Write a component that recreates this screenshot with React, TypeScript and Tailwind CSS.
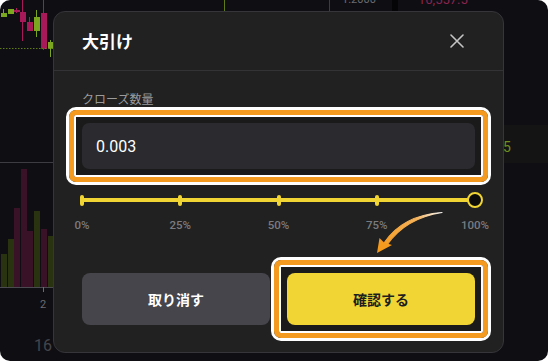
import { useState } from "react";

const marks = ["0%", "25%", "50%", "75%", "100%"];

// background candles (x, open/close top, bottom, wick top, wick bottom, up?)
const candles = [
  { x: 1, t: 13, b: 17, wt: 9, wb: 17, up: true },
  { x: 8, t: 9, b: 14, wt: 9, wb: 14, up: true },
  { x: 14, t: 10, b: 12, wt: 8, wb: 13, up: false },
  { x: 20, t: 12, b: 22, wt: 0, wb: 41, up: false },
  { x: 27, t: 22, b: 31, wt: 17, wb: 31, up: false },
  { x: 34, t: 17, b: 31, wt: 10, wb: 37, up: true },
  { x: 41, t: 13, b: 49, wt: 0, wb: 50, up: false },
  { x: 48, t: 42, b: 49, wt: 40, wb: 57, up: true },
];

const volumes = [
  { x: 1, t: 254, up: true },
  { x: 8, t: 239, up: true },
  { x: 14, t: 208, up: false },
  { x: 21, t: 169, up: false },
  { x: 27, t: 231, up: false },
  { x: 34, t: 211, up: true },
  { x: 41, t: 229, up: false },
  { x: 48, t: 236, up: true },
];

const ChartBackdrop = () => (
  <svg width="548" height="361" viewBox="0 0 548 361" className="block">
    {/* top cells */}
    <line x1="224.5" y1="0" x2="224.5" y2="12" stroke="#5e7a1a" strokeWidth="1" />
    <line x1="329.5" y1="0" x2="329.5" y2="12" stroke="#3c3c44" strokeWidth="1" />
    <rect x="392" y="0" width="6" height="12" fill="#050507" />
    <text x="342" y="3" fill="#6b6b72" fontSize="11" fontFamily="Roboto, sans-serif">1.2000</text>
    <text x="418" y="4" fill="#8a2450" fontSize="13" fontFamily="Roboto, sans-serif">16,557.5</text>

    {/* candles */}
    {candles.map((c, i) => (
      <g key={i}>
        <line x1={c.x + 2.5} y1={c.wt} x2={c.x + 2.5} y2={c.wb} stroke={c.up ? "#7aa620" : "#a8195a"} strokeWidth="1" />
        <rect x={c.x} y={c.t} width="6" height={c.b - c.t} fill={c.up ? "#7aa620" : "#a8195a"} />
      </g>
    ))}
    <line x1="0" y1="48.5" x2="53" y2="48.5" stroke="#5e7a1a" strokeWidth="1" strokeDasharray="1.5 1.5" />

    {/* pane separator */}
    <line x1="0" y1="162.5" x2="53" y2="162.5" stroke="#3c3c42" strokeWidth="1" />

    {/* volume */}
    {volumes.map((v, i) => (
      <rect key={i} x={v.x} y={v.t} width="6" height={287 - v.t} fill={v.up ? "#29330f" : "#3a1227"} />
    ))}
    <line x1="0" y1="287.5" x2="53" y2="287.5" stroke="#4a4a50" strokeWidth="1" />
    <line x1="43.5" y1="287" x2="43.5" y2="292" stroke="#6b6b72" strokeWidth="1" />
    <text x="40" y="308" fill="#6b6b72" fontSize="11" fontFamily="Roboto, sans-serif">2</text>
    <text x="34" y="351" fill="#45454b" fontSize="16" fontFamily="Roboto, sans-serif">16</text>

    {/* right band */}
    <rect x="500" y="125" width="48" height="38" fill="#141414" />
    <text x="503" y="152" fill="#6f8f1e" fontSize="14" fontFamily="Roboto, sans-serif">5</text>
  </svg>
);

// orange callout frame drawn around a control
const Callout = () => (
  <div className="absolute -inset-4 rounded-[10px] border-[3px] border-white">
    <div className="h-full w-full rounded-[7px] border-[5px] border-[#f49a1f]">
      <div className="h-full w-full rounded-[2px] border-2 border-white bg-[#1a1a1a]" />
    </div>
  </div>
);

const App = () => {
  const [amount, setAmount] = useState<string>("0.003");

  return (
    <div className="h-[363px] w-[550px] bg-white">
      <div className="relative h-[361px] w-[548px] overflow-hidden rounded-[10px] bg-[#0f0f13]">
        <ChartBackdrop />

        <div
          className="absolute left-[53px] top-[11px] flex h-[342px] w-[451px] flex-col rounded-[12px] border border-[#35353a] bg-[#212121]"
          style={{ fontFamily: '"Noto Sans", Roboto, "Noto Sans CJK JP", sans-serif' }}
        >
          <div className="flex h-[59px] items-center justify-between border-b border-[#333336] pl-[28px] pr-[39px]">
            <p className="text-[17px] font-bold text-white" style={{ fontFamily: '"Noto Sans CJK JP", sans-serif' }}>
              大引け
            </p>
            <svg width="14" height="14" viewBox="0 0 14 14" className="cursor-pointer">
              <path d="M1 1L13 13M13 1L1 13" stroke="#c4c4c4" strokeWidth="1.6" strokeLinecap="round" />
            </svg>
          </div>

          <div className="flex flex-col px-[28px]">
            <p className="mt-[19px] text-[12px] leading-[18px] text-[#9b9b9b]" style={{ fontFamily: '"Noto Sans CJK JP", sans-serif' }}>
              クローズ数量
            </p>

            <div className="relative mt-[15px] h-[46px]">
              <Callout />
              <input
                type="text"
                value={amount}
                onChange={(e) => setAmount(e.target.value)}
                className="relative h-full w-full rounded-[7px] bg-[#2a2a2f] px-[14px] text-[16px] text-white outline-0"
                style={{ fontFamily: "Roboto, sans-serif" }}
              />
            </div>

            {/* slider */}
            <div className="relative mt-[23px] h-4">
              <div className="absolute left-0 right-0 top-[6px] h-[4px] rounded-full bg-[#f0d534]" />
              <div className="relative flex h-full items-center justify-between">
                {marks.map((m, i) => (
                  <div key={m} className="flex w-0 justify-center">
                    {i < marks.length - 1 ? (
                      <div className="h-[11px] w-[4px] shrink-0 rounded-full bg-[#f0d534]" />
                    ) : (
                      <div className="h-[16px] w-[16px] shrink-0 rounded-full border-2 border-[#f0d534] bg-[#0b0b0b]" />
                    )}
                  </div>
                ))}
              </div>
            </div>

            <div className="mt-[10px] flex justify-between">
              {marks.map((m) => (
                <div key={m} className="flex w-0 justify-center">
                  <span
                    className="whitespace-nowrap text-[11.5px] font-medium leading-[14px] text-[#7b7b7f]"
                    style={{ fontFamily: "Roboto, sans-serif" }}
                  >
                    {m}
                  </span>
                </div>
              ))}
            </div>

            <div
              className="mt-[41px] grid grid-cols-2 gap-[17px]"
              style={{ fontFamily: '"Noto Sans CJK JP", sans-serif' }}
            >
              <button className="h-[52px] rounded-[8px] bg-[#45454b] text-[14px] font-bold text-white">
                取り消す
              </button>
              <div className="relative h-[52px]">
                <Callout />
                <button className="relative h-full w-full rounded-[8px] bg-[#f0d534] text-[14px] font-bold text-[#1e1e1e]">
                  確認する
                </button>
              </div>
            </div>
          </div>
        </div>

        {/* pointer arrow */}
        <svg width="548" height="361" viewBox="0 0 548 361" className="pointer-events-none absolute left-0 top-0">
          <defs>
            <linearGradient id="arr" x1="442" y1="212" x2="380" y2="250" gradientUnits="userSpaceOnUse">
              <stop offset="0" stopColor="#ffffff" stopOpacity="0.9" />
              <stop offset="0.35" stopColor="#f6b35a" />
              <stop offset="1" stopColor="#f49a1f" />
            </linearGradient>
          </defs>
          <path d="M442 212.5 C420 214 398 222 384 243 L387 245 C400 226 420 216 442 212.5 Z" fill="url(#arr)" stroke="url(#arr)" strokeWidth="1.2" strokeLinejoin="round" />
          <path d="M377 253 L379.5 238 L384 242.5 L392 245 Z" fill="#f49a1f" />
        </svg>
      </div>
    </div>
  );
};

export default App;
